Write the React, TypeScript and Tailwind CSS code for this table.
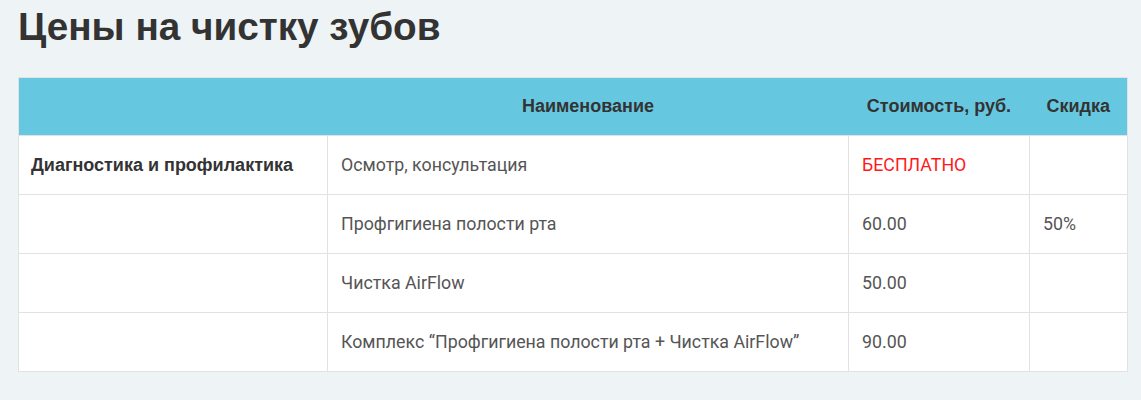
const rows = [
  { group: "Диагностика и профилактика", name: "Осмотр, консультация", price: "БЕСПЛАТНО", discount: "" },
  { group: "", name: "Профгигиена полости рта", price: "60.00", discount: "50%" },
  { group: "", name: "Чистка AirFlow", price: "50.00", discount: "" },
  { group: "", name: "Комплекс “Профгигиена полости рта + Чистка AirFlow”", price: "90.00", discount: "" },
];

export default function App() {
  return (
    <div className="min-h-[400px] bg-[#eef3f6] px-[18px] pt-[6px] pb-6 font-['Roboto',sans-serif]">
      <h1 className="font-['Liberation_Sans',Arial,sans-serif] text-[38.7px] font-bold leading-[42px] text-[#333]">
        Цены на чистку зубов
      </h1>

      {/* Price table */}
      <table className="mt-[29px] w-[1110px] table-fixed border-collapse border border-[#e2e2e2] bg-white">
        <colgroup>
          <col className="w-[309px]" />
          <col className="w-[521px]" />
          <col className="w-[181px]" />
          <col />
        </colgroup>
        <thead>
          <tr className="h-[58px] bg-[#66c8e0] font-['Liberation_Sans',Arial,sans-serif] text-[18px] font-bold text-[#333]">
            <th></th>
            <th className="text-center">Наименование</th>
            <th className="text-center">Стоимость, руб.</th>
            <th className="text-center">Скидка</th>
          </tr>
        </thead>
        <tbody className="text-[17.8px] text-[#555]">
          {rows.map((r, i) => (
            <tr key={i} className="h-[59px]">
              <td className="border border-[#e2e2e2] px-[12px] font-['Liberation_Sans',Arial,sans-serif] text-[18px] font-bold text-[#333]">
                {r.group}
              </td>
              <td className="border border-[#e2e2e2] px-[13px]">{r.name}</td>
              <td className={`border border-[#e2e2e2] px-[13px] ${r.price === "БЕСПЛАТНО" ? "text-[#ff1a1a]" : ""}`}>
                {r.price}
              </td>
              <td className="border border-[#e2e2e2] px-[13px]">{r.discount}</td>
            </tr>
          ))}
        </tbody>
      </table>
    </div>
  );
}
